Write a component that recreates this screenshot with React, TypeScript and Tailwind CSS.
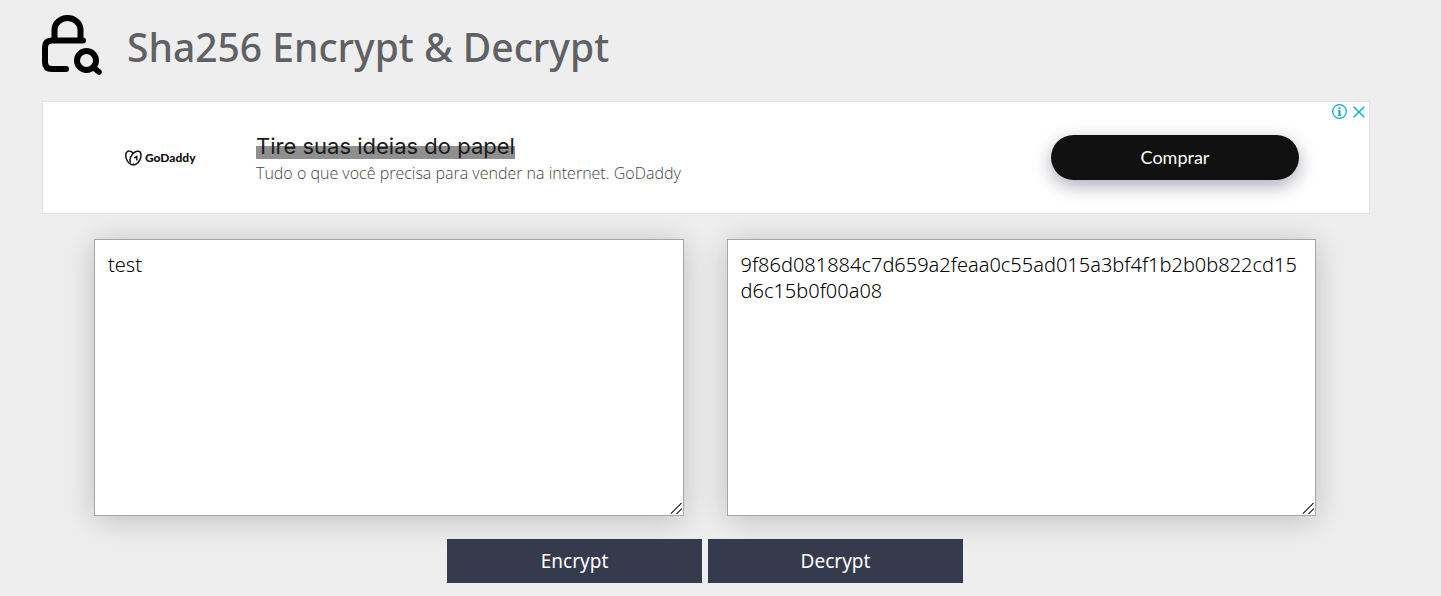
import { useState } from "react";

function LockSearchIcon() {
  return (
    <svg className="h-[60px] w-[61px] shrink-0" viewBox="0 0 61 60" fill="none" stroke="#000" strokeWidth="6" strokeLinecap="round" strokeLinejoin="round" aria-hidden="true">
      <path d="M12.500 25V15a13 12 0 0 1 26 0V25" />
      <path d="M41 25.500H10Q3 25.500 3 32.500V47Q3 54 10 54H24" />
      <circle cx="44.500" cy="45.500" r="9.500" />
      <path d="M51.500 52.500L57 57" strokeWidth="5.500" />
    </svg>
  );
}

function GoDaddyLogo() {
  return (
    <div className="flex w-[73px] shrink-0 items-center gap-[3px]">
      <svg className="h-4 w-[17px] shrink-0" viewBox="0 0 17 16" fill="none" stroke="#111" strokeWidth="1.500" aria-hidden="true">
        <path d="M8.500 3.600C6.300.600 2.800.300 1.400 2.700C-.200 5.700 1.300 10.600 4.200 13.200C6 14.800 8.400 15.200 8.800 14.500" />
        <path d="M5.600 12.700C3.900 9 6.300 4.300 10 2C12.600.500 15.400 1.100 15.900 3.900C16.500 7.500 14.400 12.200 11.100 14.200C9.600 15.100 8.300 14.900 8.500 13.300" />
        <path d="M9.200 8L11.800 6.500V10.500" />
      </svg>
      <span className="font-['Lato',sans-serif] text-[12px] leading-4 font-black text-[#111]">GoDaddy</span>
    </div>
  );
}

function Advert() {
  return (
    <section className="relative flex h-[113px] items-center border border-[#e4e4e4] bg-white pr-[70px] pl-[82px]" aria-label="GoDaddy">
      <GoDaddyLogo />
      <div className="ml-[58px] flex-1 pt-1">
        <h2 className="w-fit bg-linear-to-b from-transparent from-50% to-[#8f8f8f] to-50% font-['Inter',sans-serif] text-[22px] leading-[26px] text-[#1c1c1c]">
          Tire suas ideias do papel
        </h2>
        <p className="font-['Open_Sans',sans-serif] text-[16px] leading-7 font-light text-[#444]">
          Tudo o que você precisa para vender na internet. GoDaddy
        </p>
      </div>
      <button type="button" className="h-[45px] w-[248px] shrink-0 rounded-full bg-[#111] font-['Lato',sans-serif] text-[18px] text-white shadow-[0_6px_18px_rgba(20,20,60,0.35)]">
        Comprar
      </button>
      <div className="absolute top-[2px] right-1 flex items-center gap-[6px] text-[#00aecd]">
        <svg className="size-[15px]" viewBox="0 0 15 15" fill="none" stroke="currentColor" aria-hidden="true">
          <circle cx="7.500" cy="7.500" r="6.800" strokeWidth="1.200" />
          <path d="M7.500 3.300v1.700M7.500 6.300v5.500" strokeWidth="2" />
          <path d="M6 6.900h1.500M5.800 11.400h3.400" strokeWidth="1" />
        </svg>
        <svg className="size-3" viewBox="0 0 12 12" fill="none" stroke="currentColor" strokeWidth="1.400" aria-hidden="true">
          <path d="M.700.700l10.600 10.600M11.300.700L.700 11.300" />
        </svg>
      </div>
    </section>
  );
}

const fieldClass =
  "block h-[277px] w-full resize break-all border border-[#a5a5a5] bg-white px-[13px] py-3 font-['Noto_Sans',sans-serif] text-[20px] leading-[26px] font-light text-black shadow-[0_4px_30px_rgba(0,0,0,0.2)] outline-none [&::-webkit-resizer]:bg-[linear-gradient(135deg,transparent_42%,#555_42%,#555_51%,transparent_51%,transparent_69%,#555_69%,#555_78%,transparent_78%)] [&::-webkit-resizer]:bg-[length:11px_11px] [&::-webkit-resizer]:bg-[position:3px_3px] [&::-webkit-resizer]:bg-no-repeat";

const buttonClass =
  "h-11 w-[255px] bg-[#353b4d] font-['Noto_Sans',sans-serif] text-[19px] leading-[26px] text-white";

export default function App() {
  const [plain, setPlain] = useState("test");
  const [hash, setHash] = useState("9f86d081884c7d659a2feaa0c55ad015a3bf4f1b2b0b822cd15d6c15b0f00a08");

  return (
    <div className="min-h-screen bg-[#eee] pr-[71px] pl-[42px]">
      <header className="flex items-center gap-6 pt-[15px] pb-[26px]">
        <LockSearchIcon />
        <h1 className="pt-1 font-['Noto_Sans',sans-serif] text-[39px] leading-[56px] font-medium text-[#5f6164]">
          Sha256 Encrypt &amp; Decrypt
        </h1>
      </header>
      <Advert />
      <main className="pt-[25px] pr-[54px] pb-[13px] pl-[52px]">
        <div className="grid grid-cols-2 gap-[43px]">
          <textarea aria-label="Plain text" className={fieldClass} value={plain} onChange={(e) => setPlain(e.target.value)} spellCheck={false} />
          <textarea aria-label="Sha256 hash" className={fieldClass} value={hash} onChange={(e) => setHash(e.target.value)} spellCheck={false} />
        </div>
        <div className="relative flex justify-center gap-[6px] pt-[23px]">
          <button type="button" className={buttonClass}>Encrypt</button>
          <button type="button" className={buttonClass}>Decrypt</button>
        </div>
      </main>
    </div>
  );
}
